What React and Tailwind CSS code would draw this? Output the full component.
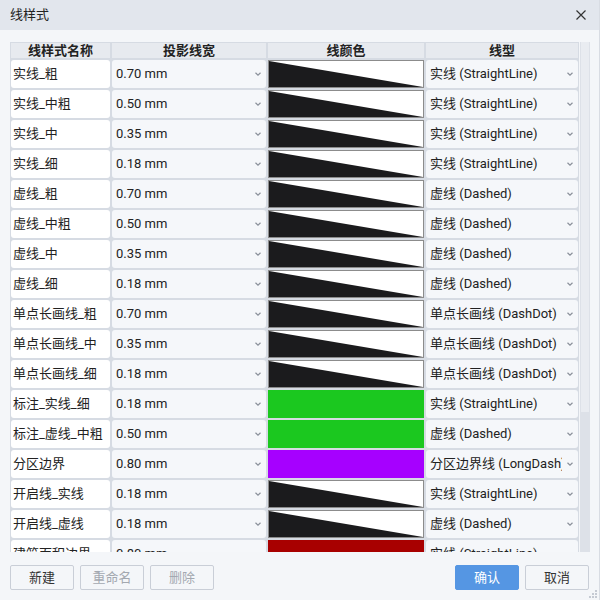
import React from "react";

const rows = [
  ["实线_粗", "0.70 mm", "tri", "实线 (StraightLine)"],
  ["实线_中粗", "0.50 mm", "tri", "实线 (StraightLine)"],
  ["实线_中", "0.35 mm", "tri", "实线 (StraightLine)"],
  ["实线_细", "0.18 mm", "tri", "实线 (StraightLine)"],
  ["虚线_粗", "0.70 mm", "tri", "虚线 (Dashed)"],
  ["虚线_中粗", "0.50 mm", "tri", "虚线 (Dashed)"],
  ["虚线_中", "0.35 mm", "tri", "虚线 (Dashed)"],
  ["虚线_细", "0.18 mm", "tri", "虚线 (Dashed)"],
  ["单点长画线_粗", "0.70 mm", "tri", "单点长画线 (DashDot)"],
  ["单点长画线_中", "0.35 mm", "tri", "单点长画线 (DashDot)"],
  ["单点长画线_细", "0.18 mm", "tri", "单点长画线 (DashDot)"],
  ["标注_实线_细", "0.18 mm", "#1bc81f", "实线 (StraightLine)"],
  ["标注_虚线_中粗", "0.50 mm", "#1bc81f", "虚线 (Dashed)"],
  ["分区边界", "0.80 mm", "#a600ff", "分区边界线 (LongDash)"],
  ["开启线_实线", "0.18 mm", "tri", "实线 (StraightLine)"],
  ["开启线_虚线", "0.18 mm", "tri", "虚线 (Dashed)"],
  ["建筑面积边界", "0.80 mm", "#a80000", "实线 (StraightLine)"],
];

function Chevron() {
  return (
    <svg width="8" height="6" viewBox="0 0 8 6" className="shrink-0">
      <path d="M1.5 1.8 L4 4.2 L6.5 1.8" fill="none" stroke="#8a909a" strokeWidth="1.2" />
    </svg>
  );
}

function Select({ text }) {
  return (
    <div className="h-[28px] bg-[#f5f7fa] rounded-[3px] flex items-center pl-[4px] pr-[4px] gap-1 overflow-hidden">
      <span className="flex-1 whitespace-nowrap overflow-hidden text-[13px] text-[#222]">{text}</span>
      <Chevron />
    </div>
  );
}

function ColorCell({ c }) {
  if (c === "tri") {
    return (
      <div className="h-[28px] bg-white border border-[#8c8c8c] overflow-hidden">
        <svg width="100%" height="100%" viewBox="0 0 100 10" preserveAspectRatio="none" className="block">
          <polygon points="0,0 100,10 0,10" fill="#1b1b1d" />
        </svg>
      </div>
    );
  }
  return <div className="h-[28px]" style={{ backgroundColor: c }} />;
}

function Btn({ children, disabled, primary }) {
  return (
    <div
      className={
        primary
          ? "w-[64px] h-[25px] rounded-[2px] bg-[#5596e3] border border-[#5596e3] text-white flex items-center justify-center text-[13px]"
          : disabled
          ? "w-[64px] h-[25px] rounded-[2px] border border-[#c9ced7] bg-[#f4f6f9] text-[#a3a8b0] flex items-center justify-center text-[13px]"
          : "w-[64px] h-[25px] rounded-[2px] border border-[#c9ced7] bg-[#f4f6f9] text-[#333] flex items-center justify-center text-[13px]"
      }
    >
      {children}
    </div>
  );
}

export default function App() {
  return (
    <div
      className="w-[600px] h-[600px] bg-[#f4f6f9] flex flex-col relative overflow-hidden border-r border-[#d8dce3]"
      style={{ fontFamily: 'Roboto, "Noto Sans CJK SC", sans-serif' }}
    >
      <div className="h-[30px] bg-[#e2e6ed] flex items-center justify-between pl-[10px] pr-[12px] shrink-0">
        <span className="text-[13px] text-[#222]">线样式</span>
        <svg width="12" height="12" viewBox="0 0 12 12">
          <path d="M1.5 1.5 L10.5 10.5 M10.5 1.5 L1.5 10.5" stroke="#333" strokeWidth="1.2" />
        </svg>
      </div>

      <div className="pl-[10px] pt-[12px] flex gap-[1px]">
        <div className="w-[569px] h-[510px] overflow-hidden bg-[#d6dbe3] p-[1px]">
          <div className="grid grid-cols-[99px_154px_156px_152px] gap-[2px]">
            {["线样式名称", "投影线宽", "线颜色", "线型"].map((h) => (
              <div key={h} className="h-[15px] bg-[#e7eaef] flex items-center justify-center text-[13px] font-bold text-[#222] leading-none">
                {h}
              </div>
            ))}
            {rows.map((r, i) => (
              <React.Fragment key={i}>
                <div className="h-[28px] bg-white rounded-[3px] flex items-center pl-[2px] text-[13px] text-[#222] whitespace-nowrap overflow-hidden">
                  {r[0]}
                </div>
                <Select text={r[1]} />
                <ColorCell c={r[2]} />
                <Select text={r[3]} />
              </React.Fragment>
            ))}
          </div>
        </div>
        <div className="w-[10px] h-[510px] bg-[#dde1e8] flex flex-col">
          <div className="h-[370px] mx-[1px] bg-[#e9ecf1]" />
        </div>
      </div>

      <div className="flex justify-between px-[10px] mt-[13px]">
        <div className="flex gap-[6px]">
          <Btn>新建</Btn>
          <Btn disabled>重命名</Btn>
          <Btn disabled>删除</Btn>
        </div>
        <div className="flex gap-[6px]">
          <Btn primary>确认</Btn>
          <Btn>取消</Btn>
        </div>
      </div>

      <svg width="10" height="10" viewBox="0 0 10 10" className="absolute right-[1px] bottom-[1px]">
        <rect x="7" y="1" width="2" height="2" fill="#c5cad3" />
        <rect x="4" y="4" width="2" height="2" fill="#c5cad3" />
        <rect x="7" y="4" width="2" height="2" fill="#c5cad3" />
        <rect x="1" y="7" width="2" height="2" fill="#c5cad3" />
        <rect x="4" y="7" width="2" height="2" fill="#c5cad3" />
        <rect x="7" y="7" width="2" height="2" fill="#c5cad3" />
      </svg>
    </div>
  );
}
